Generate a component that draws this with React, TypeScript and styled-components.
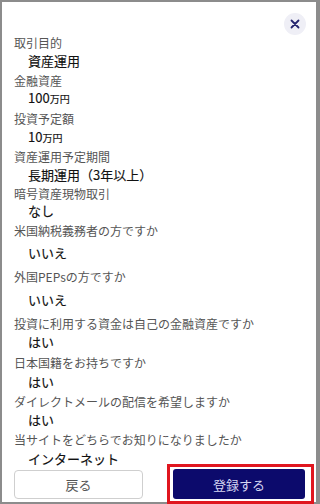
import { type FC } from "react";
import styled, { createGlobalStyle } from "styled-components";

const GlobalStyle = createGlobalStyle`
    html, body {
        margin:0;
        padding:0;
        background:#8c8c8c;
    }
    body {
        font-family: "Noto Sans CJK JP", "Noto Sans", sans-serif;
    }
`

interface IRow {
    label: string;
    value: string;
    unit?: string;
    top: number;
    after: number;
}

const rows: IRow[] = [
    { label: '取引目的', value: '資産運用', top: 0, after: 2 },
    { label: '金融資産', value: '100', unit: '万円', top: -1, after: 2 },
    { label: '投資予定額', value: '10', unit: '万円', top: 0, after: 1 },
    { label: '資産運用予定期間', value: '長期運用（3年以上）', top: 0, after: 1 },
    { label: '暗号資産現物取引', value: 'なし', top: -1, after: 2 },
    { label: '米国納税義務者の方ですか', value: 'いいえ', top: 4, after: 6 },
    { label: '外国PEPsの方ですか', value: 'いいえ', top: 5, after: 6 },
    { label: '投資に利用する資金は自己の金融資産ですか', value: 'はい', top: 0, after: 3 },
    { label: '日本国籍をお持ちですか', value: 'はい', top: 1, after: 2 },
    { label: 'ダイレクトメールの配信を希望しますか', value: 'はい', top: 0, after: 2 },
    { label: '当サイトをどちらでお知りになりましたか', value: 'インターネット', top: 1, after: 0 },
];

const App: FC = () => {
    return (
        <>
            <GlobalStyle />
            <Panel>
                <Header>
                    <CloseButton aria-label="閉じる">
                        <svg width="10" height="10" viewBox="0 0 10 10">
                            <path d="M1.5 1.5 L8.5 8.5 M8.5 1.5 L1.5 8.5" stroke="#24246e" strokeWidth="1.8" strokeLinecap="round" />
                        </svg>
                    </CloseButton>
                </Header>
                <List>
                    {rows.map((row) => (
                        <Item key={row.label} $after={row.after}>
                            <Label>{row.label}</Label>
                            <Value $top={row.top}>
                                {row.value}
                                {row.unit && <Unit>{row.unit}</Unit>}
                            </Value>
                        </Item>
                    ))}
                </List>
                <Actions>
                    <BackButton>戻る</BackButton>
                    <Highlight>
                        <SubmitButton>登録する</SubmitButton>
                    </Highlight>
                </Actions>
            </Panel>
        </>
    )
}

export default App;

const Panel = styled.div`
    margin:2px 4px 2px 2px;
    height:500px;
    background:#ffffff;
    display:flex;
    flex-direction:column;
    padding:0 2px 0 12px;
    box-sizing:border-box;
`

const Header = styled.div`
    height:32px;
    display:flex;
    justify-content:flex-end;
    align-items:flex-start;
    padding-top:11px;
    padding-right:8px;
    box-sizing:border-box;
`

const CloseButton = styled.button`
    width:22px;
    height:22px;
    border:none;
    border-radius:50%;
    background:#efeff6;
    display:flex;
    align-items:center;
    justify-content:center;
    padding:0;
    flex-shrink:0;
`

const List = styled.div`
    display:flex;
    flex-direction:column;
`

const Item = styled.div<{ $after: number }>`
    display:flex;
    flex-direction:column;
    margin-bottom:${(p) => p.$after}px;
`

const Label = styled.div`
    font-size:12px;
    line-height:18px;
    color:#555555;
    white-space:nowrap;
`

const Value = styled.div<{ $top: number }>`
    font-size:13px;
    line-height:18px;
    font-weight:400;
    color:#111111;
    -webkit-text-stroke:0.15px #111111;
    padding-left:14px;
    margin-top:${(p) => p.$top}px;
    white-space:nowrap;
`

const Unit = styled.span`
    font-size:10px;
`

const Actions = styled.div`
    margin-top:1px;
    display:flex;
    align-items:center;
    justify-content:space-between;
    height:30px;
`

const BackButton = styled.button`
    width:129px;
    height:29px;
    border:1px solid #cfcfcf;
    border-radius:4px;
    background:#ffffff;
    color:#555555;
    font-family:"Noto Sans CJK JP", "Noto Sans", sans-serif;
    font-size:13px;
    padding:0;
`

const Highlight = styled.div`
    margin:-5px 0;
    border:3px solid #e0161f;
    padding:2px 6px 2px 3px;
    display:flex;
`

const SubmitButton = styled.button`
    width:132px;
    height:30px;
    border:none;
    border-radius:3px;
    background:#0c0a6c;
    color:#d6d6f2;
    font-family:"Noto Sans CJK JP", "Noto Sans", sans-serif;
    font-size:13px;
    padding:0;
`
